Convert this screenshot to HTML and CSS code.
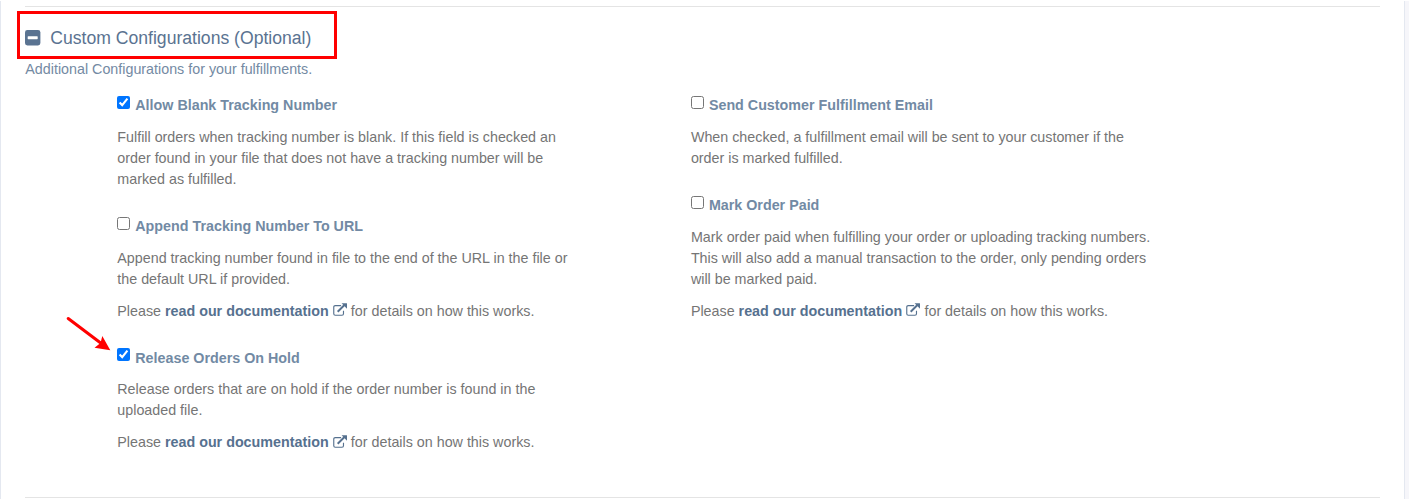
FILE: index.html
```html
<!DOCTYPE html>
<html lang="en">
<head>
<meta charset="utf-8">
<title>Custom Configurations</title>
<link rel="stylesheet" href="styles.css">
</head>
<body>
<svg width="0" height="0" class="defs"><symbol id="ext" viewBox="0 0 15 14"><path d="M8.500 2.700H2.400Q.8 2.700 .8 4.300V11.200Q.8 12.800 2.400 12.800H9.400Q11 12.800 11 11.200V8" fill="none" stroke="currentColor" stroke-width="1.200"/><path d="M4.900 9.200L12 2.100" fill="none" stroke="currentColor" stroke-width="2"/><path d="M9 .3H14.300Q14.700 .3 14.700 .7V6Z" fill="currentColor"/></symbol></svg>
<main class="panel">
  <header class="head">
    <h1 class="title"><svg class="minus" viewBox="0 0 16 16"><rect width="16" height="16" rx="2.500" fill="currentColor"/><rect x="2.800" y="6.500" width="10.400" height="3" rx=".5" fill="#fff"/></svg>Custom Configurations (Optional)</h1>
    <p class="sub">Additional Configurations for your fulfillments.</p>
  </header>
  <div class="columns">
    <div class="column">
      <section class="option">
        <label class="label"><input class="box" type="checkbox" checked>Allow Blank Tracking Number</label>
        <p class="text">Fulfill orders when tracking number is blank. If this field is checked an<br>order found in your file that does not have a tracking number will be<br>marked as fulfilled.</p>
      </section>
      <section class="option">
        <label class="label"><input class="box" type="checkbox">Append Tracking Number To URL</label>
        <p class="text">Append tracking number found in file to the end of the URL in the file or<br>the default URL if provided.</p>
        <p class="text">Please <a class="link">read our documentation <svg class="ext"><use href="#ext"/></svg></a> for details on how this works.</p>
      </section>
      <section class="option">
        <label class="label"><input class="box" type="checkbox" checked>Release Orders On Hold</label>
        <p class="text">Release orders that are on hold if the order number is found in the<br>uploaded file.</p>
        <p class="text">Please <a class="link">read our documentation <svg class="ext"><use href="#ext"/></svg></a> for details on how this works.</p>
      </section>
    </div>
    <div class="column">
      <section class="option">
        <label class="label"><input class="box" type="checkbox">Send Customer Fulfillment Email</label>
        <p class="text">When checked, a fulfillment email will be sent to your customer if the<br>order is marked fulfilled.</p>
      </section>
      <section class="option">
        <label class="label"><input class="box" type="checkbox">Mark Order Paid</label>
        <p class="text">Mark order paid when fulfilling your order or uploading tracking numbers.<br>This will also add a manual transaction to the order, only pending orders<br>will be marked paid.</p>
        <p class="text">Please <a class="link">read our documentation <svg class="ext"><use href="#ext"/></svg></a> for details on how this works.</p>
      </section>
    </div>
  </div>
</main>
<div class="callout"></div>
<svg class="arrow" viewBox="0 0 46 36"><path d="M2.200 2.500L36 28" stroke="#f00" stroke-width="3" stroke-linecap="round"/><path d="M44.300 34.300L28.500 31.800L34.500 27L36.300 20Z" fill="#f00"/></svg>
</body>
</html>
```
FILE: styles.css
```css
* { box-sizing: border-box; }
body { margin: 0; height: 499px; overflow: hidden; position: relative; padding-top: 1px; background: linear-gradient(#fff 1px, #f6f6fa 1px); font: 14.3px/21px "Liberation Sans", Arial, sans-serif; color: #757575; }
.defs { position: absolute; }
.panel { width: 1405px; height: 498px; background: #fff; border: 1px solid #e4e8f0; border-width: 0 1px; padding: 5px 24px 1px; display: flex; flex-direction: column; }
.head { border-top: 1px solid #e4e4e4; padding-top: 20px; }
.title { margin: 0; padding-left: .3px; display: flex; align-items: center; gap: 9.6px; font-size: 17.6px; line-height: 22px; font-weight: 400; color: #5a7391; }
.minus { width: 15.4px; height: 15.4px; }
.sub { margin: 10px 0 0; padding-left: .3px; color: #748aa3; }
.columns { display: flex; flex: 1; padding: 15.4px 0 0 92.3px; border-bottom: 1px solid #e4e4e4; }
.column { width: 573.6px; }
.option { margin-bottom: 26px; }
.label { display: flex; height: 21px; font-weight: 700; color: #728aa4; }
.box { width: 13px; height: 13px; margin: .7px 5px 0 0; }
.text { margin: 10.72px 0 0; white-space: nowrap; }
.link { font-weight: 700; color: #56718f; }
.ext { width: 14.3px; height: 13.4px; vertical-align: -1.3px; }
.callout { position: absolute; left: 17px; top: 11px; width: 320px; height: 48px; border: 3px solid #f00; }
.arrow { position: absolute; left: 66px; top: 316px; width: 46px; height: 36px; }
```
